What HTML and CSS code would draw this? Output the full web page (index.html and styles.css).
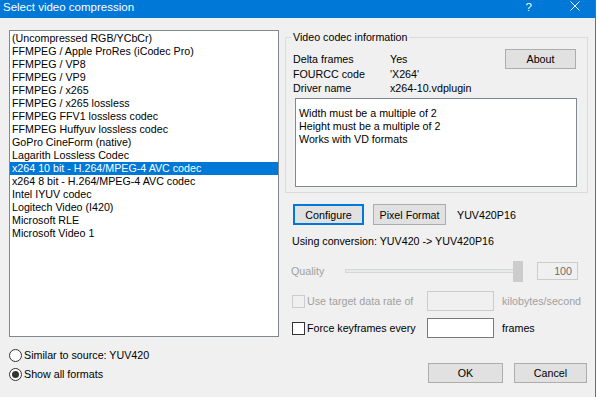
FILE: index.html
```html
<!DOCTYPE html>
<html lang="en">
<head>
    <meta charset="UTF-8">
    <meta name="viewport" content="width=device-width, initial-scale=1.0">
    <title>Select video compression</title>
    <link rel="stylesheet" href="styles.css">
</head>
<body>
    <div class="dialog">
        <div class="titlebar">
            <span class="title">Select video compression</span>
            <span class="help">?</span>
            <svg class="close" width="10" height="10" viewBox="0 0 10 10">
                <path d="M0.5 0.5 L9.5 9.5 M9.5 0.5 L0.5 9.5" stroke="#fff" stroke-width="1" fill="none"/>
            </svg>
        </div>

        <div class="content">
            <div class="left">
                <ul class="codecs">
                    <li>(Uncompressed RGB/YCbCr)</li>
                    <li>FFMPEG / Apple ProRes (iCodec Pro)</li>
                    <li>FFMPEG / VP8</li>
                    <li>FFMPEG / VP9</li>
                    <li>FFMPEG / x265</li>
                    <li>FFMPEG / x265 lossless</li>
                    <li>FFMPEG FFV1 lossless codec</li>
                    <li>FFMPEG Huffyuv lossless codec</li>
                    <li>GoPro CineForm (native)</li>
                    <li>Lagarith Lossless Codec</li>
                    <li class="selected">x264 10 bit - H.264/MPEG-4 AVC codec</li>
                    <li>x264 8 bit - H.264/MPEG-4 AVC codec</li>
                    <li>Intel IYUV codec</li>
                    <li>Logitech Video (I420)</li>
                    <li>Microsoft RLE</li>
                    <li>Microsoft Video 1</li>
                </ul>
                <div class="radios">
                    <label class="radio"><span class="dot"></span>Similar to source: YUV420</label>
                    <label class="radio checked"><span class="dot"></span>Show all formats</label>
                </div>
            </div>

            <div class="right">
                <fieldset class="info">
                    <legend>Video codec information</legend>
                    <div class="info-top">
                        <div class="props">
                            <span>Delta frames</span><span>Yes</span>
                            <span>FOURCC code</span><span>'X264'</span>
                            <span>Driver name</span><span>x264-10.vdplugin</span>
                        </div>
                        <button class="btn about">About</button>
                    </div>
                    <div class="notes">
                        <div>Width must be a multiple of 2</div>
                        <div>Height must be a multiple of 2</div>
                        <div>Works with VD formats</div>
                    </div>
                </fieldset>

                <div class="btn-row">
                    <button class="btn configure">Configure</button>
                    <button class="btn pixfmt">Pixel Format</button>
                    <span class="fmt">YUV420P16</span>
                </div>

                <div class="conv">Using conversion: YUV420 -&gt; YUV420P16</div>

                <div class="quality">
                    <span class="q-label">Quality</span>
                    <div class="track">
                        <span class="thumb"></span>
                    </div>
                    <div class="q-value">100</div>
                </div>

                <div class="opt-row disabled">
                    <span class="chk-label"><span class="box"></span>Use target data rate of</span>
                    <span class="field"></span>
                    <span class="unit">kilobytes/second</span>
                </div>

                <div class="opt-row keyframes">
                    <span class="chk-label"><span class="box"></span>Force keyframes every</span>
                    <span class="field"></span>
                    <span class="unit">frames</span>
                </div>

                <div class="actions">
                    <button class="btn ok">OK</button>
                    <button class="btn cancel">Cancel</button>
                </div>
            </div>
        </div>
    </div>
</body>
</html>
```

FILE: styles.css
```css
html {
    background-color: #ffffff;
}
body {
    margin: 0;
    font-family: "Liberation Sans", Arial, sans-serif;
    font-size: 10.7px;
    color: #000;
}
.dialog {
    width: 595px;
    height: 397px;
    background-color: #f0f0f0;
    border-right: 1px solid #1883d7;
    overflow: hidden;
}
.titlebar {
    height: 18px;
    background-color: #0078d7;
    color: #fff;
    display: flex;
    align-items: flex-start;
    font-size: 11.5px;
    line-height: 14px;
}
.title {
    padding-left: 3px;
}
.help {
    margin-left: auto;
    margin-right: 38px;
}
.close {
    margin-top: 1px;
    margin-right: 15px;
}
.content {
    display: flex;
    gap: 6px;
    padding-left: 9px;
}
.left {
    width: 270px;
}
.codecs {
    list-style: none;
    margin: 12px 0 0;
    padding: 1px 0 0;
    width: 270px;
    height: 307px;
    box-sizing: border-box;
    border: 1px solid #828790;
    background-color: #fff;
}
.codecs li {
    height: 13px;
    line-height: 13px;
    padding-left: 2px;
    white-space: nowrap;
}
.codecs li.selected {
    background-color: #0078d7;
    color: #fff;
}
.radios {
    margin-top: 12px;
    display: flex;
    flex-direction: column;
    gap: 6px;
}
.radio {
    display: flex;
    align-items: center;
    height: 13px;
    line-height: 13px;
}
.dot {
    width: 13px;
    height: 13px;
    box-sizing: border-box;
    border: 1px solid #333;
    border-radius: 50%;
    background-color: #fff;
    margin-right: 2px;
    display: flex;
    align-items: center;
    justify-content: center;
}
.radio.checked .dot::after {
    content: "";
    width: 7px;
    height: 7px;
    border-radius: 50%;
    background-color: #333;
}
.right {
    width: 310px;
}
.info {
    margin: 13px 0 0;
    width: 303px;
    box-sizing: border-box;
    border: 1px solid #dcdcdc;
    padding: 8px 10px 5px 7px;
}
.info legend {
    padding: 0 2px;
    margin-left: -2px;
    line-height: 13px;
}
.info-top {
    display: flex;
}
.props {
    display: grid;
    grid-template-columns: 97px auto;
    line-height: 14.5px;
}
.btn {
    font-family: inherit;
    font-size: 10.7px;
    color: #000;
    background-color: #e1e1e1;
    border: 1px solid #adadad;
    padding: 0;
    box-sizing: border-box;
    height: 21px;
}
.about {
    margin-left: auto;
    margin-right: 1px;
    margin-top: -3px;
    width: 71px;
    height: 20px;
}
.notes {
    margin: 2.5px 0 0 2px;
    height: 89px;
    box-sizing: border-box;
    border: 1px solid #828790;
    background-color: #fff;
    padding: 8px 3px;
    line-height: 13px;
}
.btn-row {
    display: flex;
    align-items: center;
    margin-top: 11px;
    padding-left: 8px;
}
.configure {
    width: 71px;
    border: 2px solid #0078d7;
}
.pixfmt {
    width: 73px;
    margin-left: 9px;
}
.fmt {
    margin-left: 11px;
}
.conv {
    margin-top: 10px;
    padding-left: 7px;
    line-height: 13px;
}
.quality {
    display: flex;
    align-items: center;
    height: 21px;
    margin-top: 12px;
    padding-left: 6px;
    color: #a0a0a0;
}
.q-label {
    width: 54px;
}
.track {
    position: relative;
    width: 178px;
    height: 4px;
    box-sizing: border-box;
    background-color: #e7eaea;
    border: 1px solid #d6d6d6;
}
.thumb {
    position: absolute;
    right: -1px;
    top: -9px;
    width: 10px;
    height: 21px;
    background-color: #cccccc;
}
.q-value {
    margin-left: 14px;
    width: 41px;
    height: 18px;
    box-sizing: border-box;
    border: 1px solid #cccccc;
    text-align: right;
    padding-right: 5px;
    line-height: 16px;
    color: #6d6d6d;
}
.opt-row {
    display: flex;
    align-items: center;
    height: 20px;
    margin-top: 10px;
}
.opt-row.keyframes {
    margin-top: 7px;
}
.chk-label {
    display: flex;
    align-items: center;
    width: 142px;
    padding-left: 7px;
    box-sizing: border-box;
}
.box {
    width: 13px;
    height: 13px;
    box-sizing: border-box;
    border: 1px solid #333;
    background-color: #fff;
    margin-right: 2px;
}
.field {
    width: 67px;
    height: 20px;
    box-sizing: border-box;
    border: 1px solid #7a7a7a;
    background-color: #fff;
}
.unit {
    margin-left: 8px;
}
.opt-row.disabled {
    color: #a0a0a0;
}
.opt-row.disabled .box {
    border-color: #cccccc;
    background-color: #f0f0f0;
}
.opt-row.disabled .field {
    border-color: #cccccc;
    background-color: #f0f0f0;
}
.actions {
    display: flex;
    justify-content: flex-end;
    gap: 11px;
    margin-top: 25px;
    padding-right: 8px;
}
.ok {
    width: 75px;
    height: 20px;
}
.cancel {
    width: 73px;
    height: 20px;
}
```
